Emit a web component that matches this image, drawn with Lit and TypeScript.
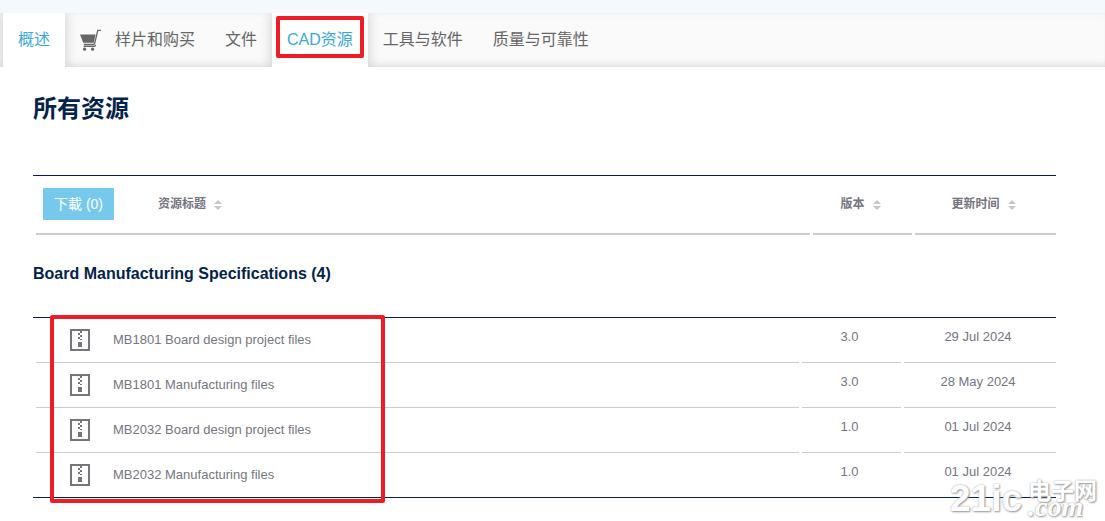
import { LitElement, html, svg, css } from "lit";
import { customElement, property } from "lit/decorators.js";

interface Resource {
  title: string;
  version: string;
  date: string;
}

const RESOURCES: Resource[] = [
  { title: "MB1801 Board design project files", version: "3.0", date: "29 Jul 2024" },
  { title: "MB1801 Manufacturing files", version: "3.0", date: "28 May 2024" },
  { title: "MB2032 Board design project files", version: "1.0", date: "01 Jul 2024" },
  { title: "MB2032 Manufacturing files", version: "1.0", date: "01 Jul 2024" },
];

const cartIcon = svg`<svg class="cart" width="21" height="22" viewBox="0 0 21 22" aria-hidden="true">
  <path d="M0 5.5h15.6l-1.8 8.3H3.2z" fill="#666"/>
  <path d="M20.8 1.4h-3L14.6 14.6c-.2.7-.4.9-1 .9H3.8M3.6 17.4h10.6c1 0 1.4-.6 1.2-1.6" fill="none" stroke="#666" stroke-width="1.3"/>
  <circle cx="4.6" cy="20.2" r="1.6" fill="#666"/><circle cx="12.6" cy="20.2" r="1.6" fill="#666"/>
</svg>`;

const zipIcon = svg`<svg class="zip" width="20" height="22" viewBox="0 0 20 22" shape-rendering="crispEdges" aria-hidden="true">
  <path d="M1 1h18v20H1z" fill="none" stroke="#75757f" stroke-width="2"/>
  <path d="M10 2h2v2h-2zM8 4h2v2H8zM10 6h2v2h-2zM8 8h2v2H8zM10 10h2v1h-2zM8 13h4v5H8z" fill="#75757f"/>
</svg>`;

@customElement("sort-button")
export class SortButton extends LitElement {
  @property() label = "";

  static styles = css`
    :host {
      display: inline-block;
    }
    .sort {
      display: flex;
      align-items: center;
      gap: 8px;
      padding: 0;
      border: 0;
      background: none;
      color: #75757f;
      font: bold 12px/20px "Liberation Sans", "Noto Sans CJK SC", sans-serif;
      cursor: pointer;
    }
    .arrows {
      display: block;
      margin-top: 2px;
    }
  `;

  render() {
    return html`<button class="sort" type="button">
      ${this.label}
      <svg class="arrows" width="8" height="10" viewBox="0 0 8 10" aria-hidden="true">
        <path d="M0 4L4 0l4 4zM0 6h8l-4 4z" fill="#c6c6c6" />
      </svg>
    </button>`;
  }
}

@customElement("app-root")
export class AppRoot extends LitElement {
  static styles = css`
    :host {
      display: block;
      position: relative;
      min-height: 100vh;
      overflow: hidden;
      background: #fff;
      color: #75757f;
      font: 14px/20px "Liberation Sans", "Noto Sans CJK SC", sans-serif;
    }
    .band {
      height: 13px;
      background: #f4f9fd;
    }
    .tabs {
      display: flex;
      height: 54px;
      padding-left: 3px;
      overflow: hidden;
      background: #fafafa;
      box-shadow: inset 0 -8px 8px -6px rgba(0, 0, 0, 0.12), inset 0 4px 6px -4px rgba(0, 0, 0, 0.06);
    }
    .tab {
      display: flex;
      align-items: center;
      gap: 14px;
      padding: 0 15px;
      color: #666;
      font-size: 16px;
      line-height: 24px;
      text-decoration: none;
      white-space: nowrap;
    }
    .tab.lit {
      position: relative;
      background: #fff;
      color: #39a9dc;
      box-shadow: 0 0 12px rgba(0, 0, 0, 0.2);
    }
    .mark {
      position: absolute;
      border: 4px solid #ee1c25;
      border-radius: 2px;
      box-sizing: border-box;
      pointer-events: none;
    }
    .mark-tab {
      inset: 3px 4px 9px;
    }
    .mark-files {
      top: -3px;
      bottom: -6px;
      left: 17px;
      width: 335px;
    }
    .content {
      padding: 25px 49px 0 33px;
    }
    .title {
      margin: 0 0 50px;
      color: #03234b;
      font-size: 24px;
      line-height: 33px;
    }
    .head {
      border-top: 1px solid #03234b;
    }
    .group {
      margin: 27px 0 31px;
      color: #03234b;
      font-size: 16px;
      line-height: 24px;
    }
    .list {
      position: relative;
      border: solid #03234b;
      border-width: 1px 0;
    }
    .grid {
      width: calc(100% + 3px);
      table-layout: fixed;
      border-collapse: separate;
      border-spacing: 3px 0;
    }
    .grid th,
    .grid td {
      padding: 0;
      font-size: 13px;
      line-height: 20px;
    }
    .grid th {
      box-sizing: border-box;
      height: 59px;
      padding: 0 4px 2px 0;
      border-bottom: 2px solid #ccc;
      text-align: center;
    }
    .lead {
      display: flex;
      align-items: center;
      gap: 44px;
      padding-left: 7px;
    }
    .download {
      height: 32px;
      padding: 0 11px;
      border: 0;
      background: #76c9ec;
      color: #fff;
      font: 14px/20px "Liberation Sans", "Noto Sans CJK SC", sans-serif;
      cursor: pointer;
    }
    .col-version {
      width: 99px;
    }
    .head .col-date {
      width: 141px;
    }
    .list .col-date {
      width: 152px;
    }
    .grid td {
      box-sizing: border-box;
      height: 45px;
      padding-bottom: 1px;
      border-bottom: 1px solid #ccc;
    }
    .grid tr:last-child td {
      height: 44px;
      border-bottom: 0;
    }
    .grid .meta {
      padding: 0 4px 7px 0;
      text-align: center;
    }
    .file {
      display: flex;
      align-items: center;
      gap: 23px;
      padding-left: 34px;
      color: inherit;
      text-decoration: none;
    }
    .watermark {
      position: absolute;
      right: 8px;
      bottom: 6px;
      display: flex;
      align-items: end;
      gap: 6px;
      color: #fff;
      text-shadow: 1px 1px 2px #999, 0 0 2px #aaa;
    }
    .wm-name {
      font: bold 37px/32px "Liberation Sans", sans-serif;
    }
    .wm-side {
      display: grid;
    }
    .wm-cn {
      font: bold 23px/20px "Noto Sans CJK SC", sans-serif;
    }
    .wm-com {
      font: italic bold 28px/16px "Liberation Serif", serif;
    }
  `;

  render() {
    return html`
      <div class="band"></div>
      <nav class="tabs">
        <a class="tab lit" href="#overview">概述</a>
        <a class="tab" href="#buy">${cartIcon}样片和购买</a>
        <a class="tab" href="#docs">文件</a>
        <a class="tab lit" href="#cad">CAD资源<span class="mark mark-tab"></span></a>
        <a class="tab" href="#tools">工具与软件</a>
        <a class="tab" href="#quality">质量与可靠性</a>
      </nav>
      <main class="content">
        <h1 class="title">所有资源</h1>
        <div class="head">
          <table class="grid">
            <colgroup><col /><col class="col-version" /><col class="col-date" /></colgroup>
            <tr>
              <th scope="col">
                <div class="lead">
                  <button class="download" type="button">下載 (0)</button>
                  <sort-button label="资源标题"></sort-button>
                </div>
              </th>
              <th scope="col"><sort-button label="版本"></sort-button></th>
              <th scope="col"><sort-button label="更新时间"></sort-button></th>
            </tr>
          </table>
        </div>
        <h2 class="group">Board Manufacturing Specifications (${RESOURCES.length})</h2>
        <div class="list">
          <table class="grid">
            <colgroup><col /><col class="col-version" /><col class="col-date" /></colgroup>
            ${RESOURCES.map(
              (r) => html`<tr>
                <td><a class="file" href="#file">${zipIcon}${r.title}</a></td>
                <td class="meta">${r.version}</td>
                <td class="meta">${r.date}</td>
              </tr>`
            )}
          </table>
          <span class="mark mark-files"></span>
        </div>
      </main>
      <div class="watermark">
        <span class="wm-name">21ic</span>
        <span class="wm-side"><span class="wm-cn">电子网</span><span class="wm-com">.com</span></span>
      </div>
    `;
  }
}
